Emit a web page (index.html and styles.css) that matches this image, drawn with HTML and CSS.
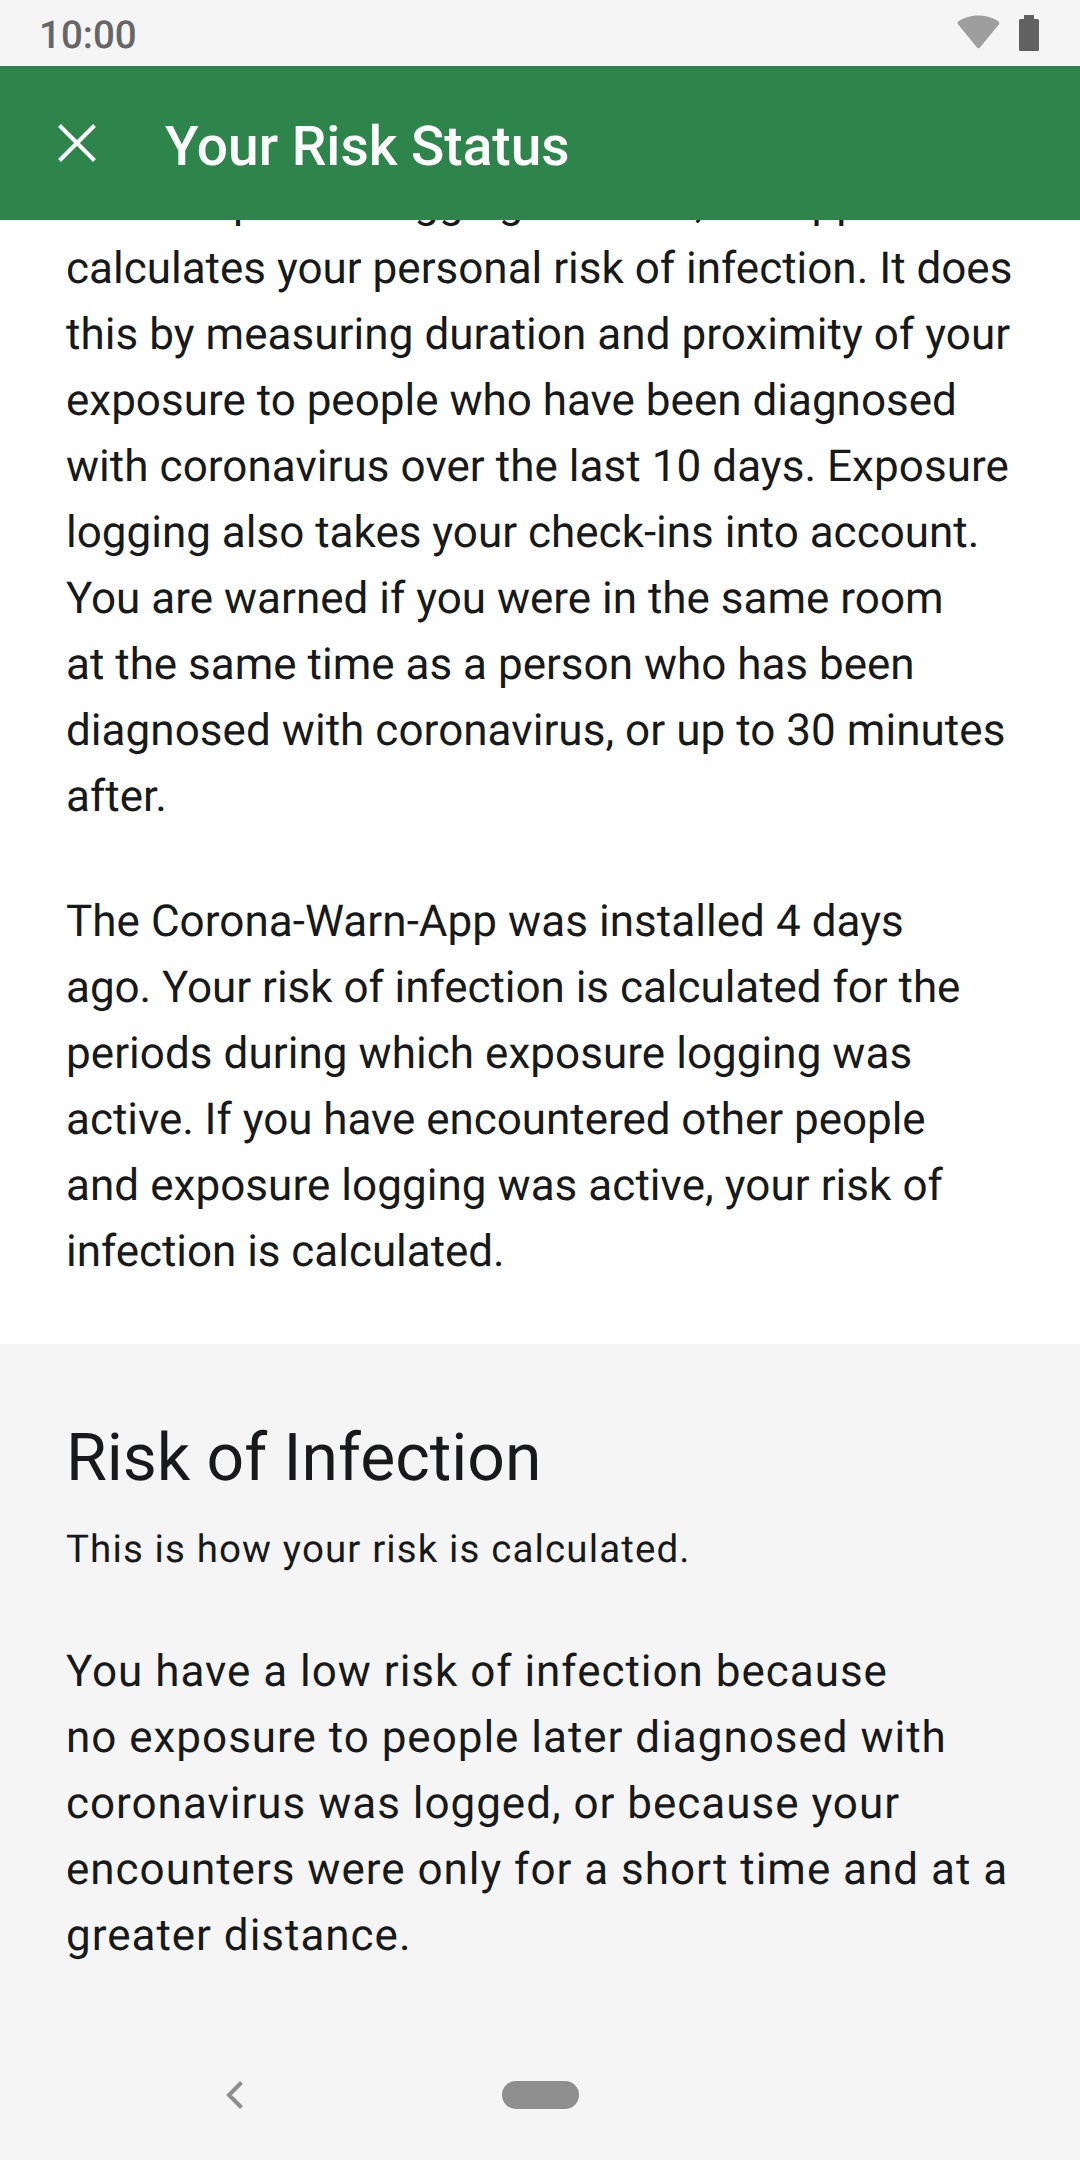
FILE: index.html
```html
<!DOCTYPE html>
<html lang="en">
<head>
<meta charset="utf-8">
<title>Your Risk Status</title>
<link rel="stylesheet" href="styles.css">
</head>
<body>
<div class="screen">
  <div class="status-bar">
    <span class="clock">10:00</span>
    <div class="status-icons">
      <svg width="44" height="36" viewBox="0 0 44 36"><path d="M22.500 .5C14.500 .5 7 3 2.300 6.500Q.8 7.800 2 9.300L21 32.500q1.500 1.500 3 0L43 9.300q1-1.500-.5-2.800C37.500 3 30.500 .5 22.500 .5z" fill="#9e9e9e"/></svg>
      <svg width="20" height="36" viewBox="0 0 20 36"><path d="M5 4V0h10v4h3.500Q20 4 20 5.500v29q0 1.500-1.500 1.500h-17Q0 36 0 34.500v-29Q0 4 1.500 4z" fill="#616161"/></svg>
    </div>
  </div>
  <header class="app-bar">
    <svg class="close" width="38" height="38" viewBox="0 0 38 38"><path d="M1.500 1.500l35 35M36.500 1.500l-35 35" stroke="#fff" stroke-width="4"/></svg>
    <h1 class="title">Your Risk Status</h1>
  </header>
  <main class="content">
    <section class="logging">
      <p class="text first">When exposure logging is active, the app<br>calculates your personal risk of infection. It does<br><span class="loose">this by measuring duration and proximity of your</span><br>exposure to people who have been diagnosed<br><span class="loose">with coronavirus over the last 10 days. Exposure</span><br>logging also takes your check-ins into account.<br>You are warned if you were in the same room<br>at the same time as a person who has been<br><span class="loose">diagnosed with coronavirus, or up to 30 minutes</span><br>after.</p>
      <p class="text"><span class="loose">The Corona-Warn-App was installed 4 days</span><br><span class="tight">ago. Your risk of infection is calculated for the</span><br><span class="loose">periods during which exposure logging was</span><br><span class="tight">active. If you have encountered other people</span><br><span class="loose">and exposure logging was active, your risk of</span><br><span class="tight">infection is calculated.</span></p>
    </section>
    <section class="risk">
      <h2 class="heading">Risk of Infection</h2>
      <p class="subtitle">This is how your risk is calculated.</p>
      <p class="text spaced">You have a low risk of infection because<br>no exposure to people later diagnosed with<br>coronavirus was logged, or because your<br>encounters were only for a short time and at a<br>greater distance.</p>
    </section>
  </main>
  <nav class="nav-bar">
    <svg class="back" width="18" height="28" viewBox="0 0 18 28"><path d="M15.500 1.500 3 14l12.500 12.500" fill="none" stroke="#8e8e8e" stroke-width="4"/></svg>
    <span class="home"></span>
  </nav>
</div>
</body>
</html>
```
FILE: styles.css
```css
* { box-sizing: border-box; }
body { margin: 0; font-family: Roboto, sans-serif; color: #17191a; text-rendering: geometricPrecision; }
.screen { width: 1080px; height: 2160px; display: flex; flex-direction: column; overflow: hidden; background: #f5f5f5; }
.status-bar { height: 66px; flex: none; display: flex; justify-content: space-between; align-items: center; padding: 0 41px 0 39px; }
.clock { font-size: 38.500px; font-weight: 500; color: #666; line-height: 66px; padding-top: 3px; margin-top: 2px; }
.status-icons { display: flex; gap: 19px; align-items: center; }
.app-bar { height: 154px; flex: none; display: flex; align-items: center; padding-left: 58px; gap: 69px; background: #2e854b; color: #fff; }
.title { margin: 8px 0 0; font-size: 55px; font-weight: 500; }
.content { flex: 1; min-height: 0; overflow: hidden; }
.logging { height: 1124px; padding: 0 66px; background: #fff; overflow: hidden; }
.text { margin: 0; font-size: 44px; line-height: 66px; white-space: nowrap; }
.text.first { margin: -51px 0 59px; }
.loose { letter-spacing: 0.050px; }
.tight { letter-spacing: -0.040px; }
.risk { padding: 67px 66px 0; }
.heading { margin: 0; font-size: 66px; line-height: 96px; font-weight: 400; }
.subtitle { margin: 14px 0 59px; font-size: 38.500px; line-height: 58px; letter-spacing: 1.120px; }
.spaced { letter-spacing: 0.980px; }
.nav-bar { height: 132px; flex: none; display: flex; align-items: center; padding: 1px 0 0 226px; }
.home { width: 77px; height: 28px; margin-left: 258px; border-radius: 14px; background: #8e8e8e; }
```
